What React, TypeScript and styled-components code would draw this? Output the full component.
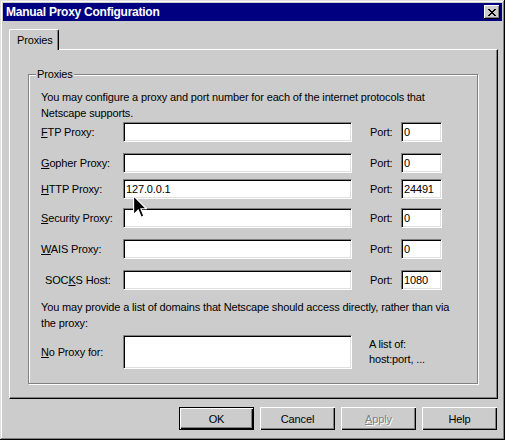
import React from "react";
import styled, { createGlobalStyle } from "styled-components";

const GlobalStyle = createGlobalStyle`
  html, body {
    margin: 0;
    padding: 0;
    background: #cccccc;
  }
  body {
    font-family: "Liberation Sans", Arial, sans-serif;
    font-size: 11px;
    letter-spacing: -0.15px;
    color: #000;
  }
`;

const Window = styled.div`
  position: relative;
  width: 505px;
  height: 440px;
  box-sizing: border-box;
  padding: 3px;
  background: #cccccc;
  display: flex;
  flex-direction: column;
  box-shadow: inset -1px -1px #000, inset 1px 1px #dfdfdf,
    inset -2px -2px #808080, inset 2px 2px #fff;
`;

const TitleBar = styled.div`
  height: 18px;
  flex: none;
  background: #000080;
  color: #fff;
  display: flex;
  align-items: center;
  justify-content: space-between;
  padding: 0 2px 0 3px;
`;

const Title = styled.span`
  font-weight: bold;
  font-size: 12px;
  letter-spacing: -0.25px;
`;

const CloseButton = styled.div`
  width: 16px;
  height: 14px;
  box-sizing: border-box;
  background: #cccccc;
  display: flex;
  align-items: center;
  justify-content: center;
  box-shadow: inset -1px -1px #000, inset 1px 1px #fff, inset -2px -2px #808080;
`;

const Body = styled.div`
  flex: 1;
  display: flex;
  flex-direction: column;
  padding: 8px 4px 0 6px;
`;

const TabStrip = styled.div`
  display: flex;
  position: relative;
  z-index: 1;
`;

const Tab = styled.div`
  box-sizing: border-box;
  width: 50px;
  height: 21px;
  margin-bottom: -1px;
  padding: 3px 0 0 7px;
  background: #cccccc;
  border-top: 1px solid #fff;
  border-left: 1px solid #fff;
  border-right: 1px solid #000;
  border-top-left-radius: 2px;
  border-top-right-radius: 2px;
  box-shadow: inset -1px 0 #808080;
  line-height: 14px;
`;

const Panel = styled.div`
  box-sizing: border-box;
  height: 350px;
  flex: none;
  padding: 17px 19px 0 18px;
  border-top: 1px solid #fff;
  border-left: 1px solid #fff;
  border-right: 1px solid #000;
  border-bottom: 1px solid #000;
  box-shadow: inset -1px -1px #808080;
`;

const Group = styled.fieldset`
  margin: 0;
  padding: 8px 12px 14px 12px;
  border: 1px solid #808080;
  box-shadow: inset 1px 1px #fff, 1px 1px #fff;
`;

const Legend = styled.legend`
  padding: 0 1px;
  margin-left: -5px;
  line-height: 14px;
  background: #cccccc;
`;

const Note = styled.p<{ $top?: number }>`
  margin: ${(p) => p.$top ?? 0}px 0 0 0;
  line-height: 16px;
  white-space: nowrap;
`;

const Row = styled.div<{ $gap: number }>`
  display: grid;
  grid-template-columns: 82px 229px 18px 31px 41px;
  align-items: center;
  margin-top: ${(p) => p.$gap}px;
`;

const Label = styled.label<{ $indent?: number }>`
  padding-left: ${(p) => p.$indent ?? 0}px;
  white-space: nowrap;
`;

const Field = styled.div<{ $tall?: boolean }>`
  box-sizing: border-box;
  height: ${(p) => (p.$tall ? 34 : 20)}px;
  background: #fff;
  padding: 2px 2px 0;
  line-height: 15px;
  border-style: solid;
  border-width: 1px;
  border-color: #808080 #fff #fff #808080;
  box-shadow: inset 1px 1px #000, inset -1px -1px #dfdfdf;
  white-space: nowrap;
  overflow: hidden;
`;

const PortLabel = styled.span`
  grid-column: 4;
`;

const NoProxyRow = styled.div`
  display: grid;
  grid-template-columns: 82px 229px 1fr;
  align-items: center;
  margin-top: 4px;
`;

const Hint = styled.div`
  padding-left: 17px;
  line-height: 15px;
  white-space: nowrap;
`;

const ButtonBar = styled.div`
  display: flex;
  justify-content: flex-end;
  gap: 6px;
  margin-top: 8px;
  padding-right: 1px;
`;

const Button = styled.div<{ $default?: boolean; $disabled?: boolean }>`
  box-sizing: border-box;
  width: 75px;
  height: 23px;
  display: flex;
  align-items: center;
  justify-content: center;
  background: #cccccc;
  color: ${(p) => (p.$disabled ? "#808080" : "#000")};
  text-shadow: ${(p) => (p.$disabled ? "1px 1px #fff" : "none")};
  border: ${(p) => (p.$default ? "1px solid #000" : "none")};
  box-shadow: inset 1px 1px #fff, inset -1px -1px #000, inset -2px -2px #808080;
`;

const Cursor = styled.svg`
  position: absolute;
  left: 133px;
  top: 195px;
`;

const Key = ({ text, k }: { text: string; k: number }) => (
  <>
    {text.slice(0, k)}
    <u>{text[k]}</u>
    {text.slice(k + 1)}
  </>
);

const rows = [
  { label: "FTP Proxy:", k: 0, value: "", port: "0", gap: 1 },
  { label: "Gopher Proxy:", k: 0, value: "", port: "0", gap: 11 },
  { label: "HTTP Proxy:", k: 0, value: "127.0.0.1", port: "24491", gap: 6 },
  { label: "Security Proxy:", k: 0, value: "", port: "0", gap: 9 },
  { label: "WAIS Proxy:", k: 0, value: "", port: "0", gap: 11 },
  { label: "SOCKS Host:", k: 3, value: "", port: "1080", gap: 11, indent: 4 },
];

export default function App() {
  return (
    <>
      <GlobalStyle />
      <Window>
        <TitleBar>
          <Title>Manual Proxy Configuration</Title>
          <CloseButton>
            <svg width="8" height="7" viewBox="0 0 8 7">
              <path
                d="M0 0h2v1h1v1h2v-1h1v-1h2v1h-1v1h-1v1h-1v1h1v1h1v1h1v1h-2v-1h-1v-1h-2v1h-1v1h-2v-1h1v-1h1v-1h1v-1h-1v-1h-1v-1h-1z"
                fill="#000"
              />
            </svg>
          </CloseButton>
        </TitleBar>
        <Body>
          <TabStrip>
            <Tab>Proxies</Tab>
          </TabStrip>
          <Panel>
            <Group>
              <Legend>Proxies</Legend>
              <Note>
                You may configure a proxy and port number for each of the internet protocols that
                <br />
                Netscape supports.
              </Note>
              {rows.map((r) => (
                <Row key={r.label} $gap={r.gap}>
                  <Label $indent={r.indent}>
                    <Key text={r.label} k={r.k} />
                  </Label>
                  <Field>{r.value}</Field>
                  <PortLabel>Port:</PortLabel>
                  <Field>{r.port}</Field>
                </Row>
              ))}
              <Note $top={9}>
                You may provide a list of domains that Netscape should access directly, rather than via
                <br />
                the proxy:
              </Note>
              <NoProxyRow>
                <Label>
                  <Key text="No Proxy for:" k={0} />
                </Label>
                <Field $tall />
                <Hint>
                  A list of:
                  <br />
                  host:port, ...
                </Hint>
              </NoProxyRow>
            </Group>
          </Panel>
          <ButtonBar>
            <Button $default>OK</Button>
            <Button>Cancel</Button>
            <Button $disabled>
              <Key text="Apply" k={0} />
            </Button>
            <Button>Help</Button>
          </ButtonBar>
        </Body>
        <Cursor width="14" height="24" viewBox="0 0 12 20">
          <path
            d="M0.5 0.5 L0.5 16.5 L4.5 12.5 L7 18.8 L9.3 17.8 L6.8 11.5 L11.5 11.5 Z"
            fill="#000"
            stroke="#fff"
            strokeWidth="1"
          />
        </Cursor>
      </Window>
    </>
  );
}
